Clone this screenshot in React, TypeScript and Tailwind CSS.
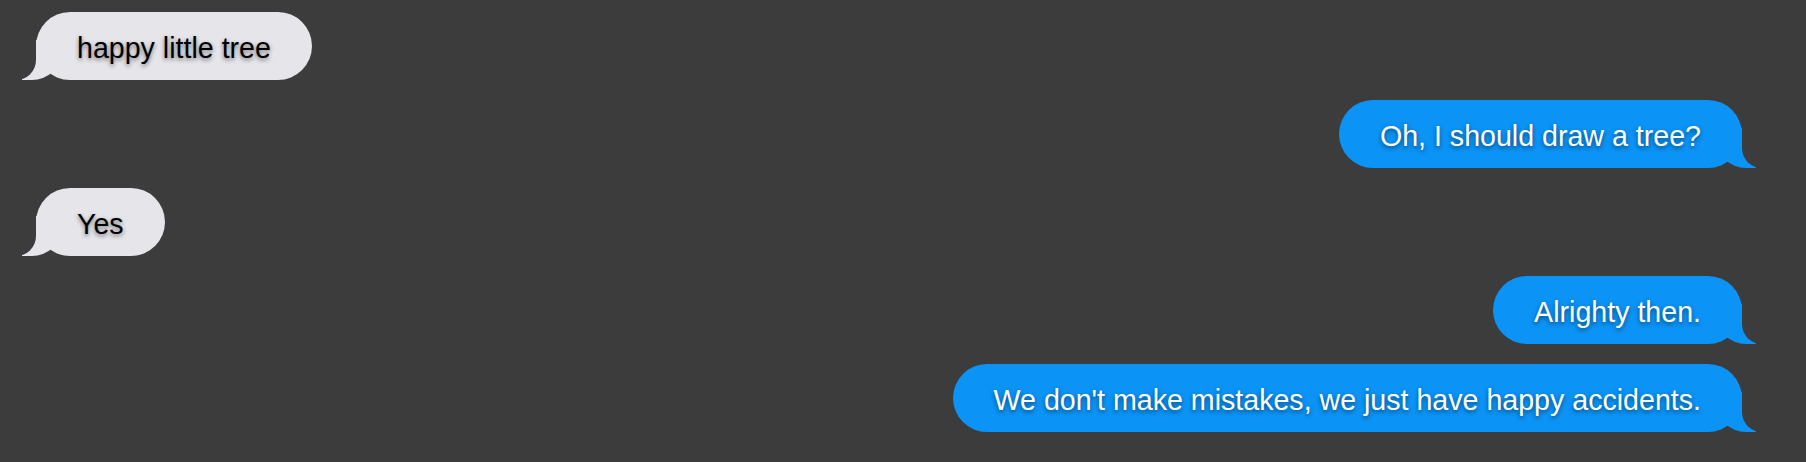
const messages = [
  { from: 'yours', text: 'happy little tree' },
  { from: 'mine', text: 'Oh, I should draw a tree?' },
  { from: 'yours', text: 'Yes' },
  { from: 'mine', text: 'Alrighty then.' },
  { from: 'mine', text: "We don't make mistakes, we just have happy accidents." },
];

function Bubble({ from, text }: { from: string; text: string }) {
  if (from === 'yours') {
    return (
      <div className="flex justify-start">
        <div className="relative rounded-[34px] bg-[#e5e5ea] px-[41px] pt-[20px] pb-[16px] text-[28.6px] leading-[32px] text-black [text-shadow:0_2px_4px_rgba(0,0,0,0.5)]">
          <div className="absolute bottom-0 left-[-14px] z-0 h-[40px] w-[40px] rounded-br-[30px] bg-[#e5e5ea]" />
          <div className="absolute bottom-0 left-[-20px] z-10 h-[40px] w-[20px] rounded-br-[20px] bg-[#3c3c3c]" />
          <span className="relative z-20">{text}</span>
        </div>
      </div>
    );
  }
  return (
    <div className="flex justify-end">
      <div className="relative rounded-[34px] bg-[#0b93f6] px-[41px] pt-[20px] pb-[16px] text-[28.6px] leading-[32px] text-white [text-shadow:0_2px_4px_rgba(0,0,0,0.5)]">
        <div className="absolute bottom-0 right-[-14px] z-0 h-[40px] w-[40px] rounded-bl-[30px] bg-[#0b93f6]" />
        <div className="absolute bottom-0 right-[-20px] z-10 h-[40px] w-[20px] rounded-bl-[20px] bg-[#3c3c3c]" />
        <span className="relative z-20">{text}</span>
      </div>
    </div>
  );
}

export default function App() {
  return (
    <div className="h-[462px] w-full bg-[#3c3c3c] font-['Liberation_Sans',Arial,sans-serif]">
      <div className="flex flex-col gap-[20px] pl-[36px] pr-[64px] pt-[12px]">
        {messages.map((m, i) => (
          <Bubble key={i} from={m.from} text={m.text} />
        ))}
      </div>
    </div>
  );
}
